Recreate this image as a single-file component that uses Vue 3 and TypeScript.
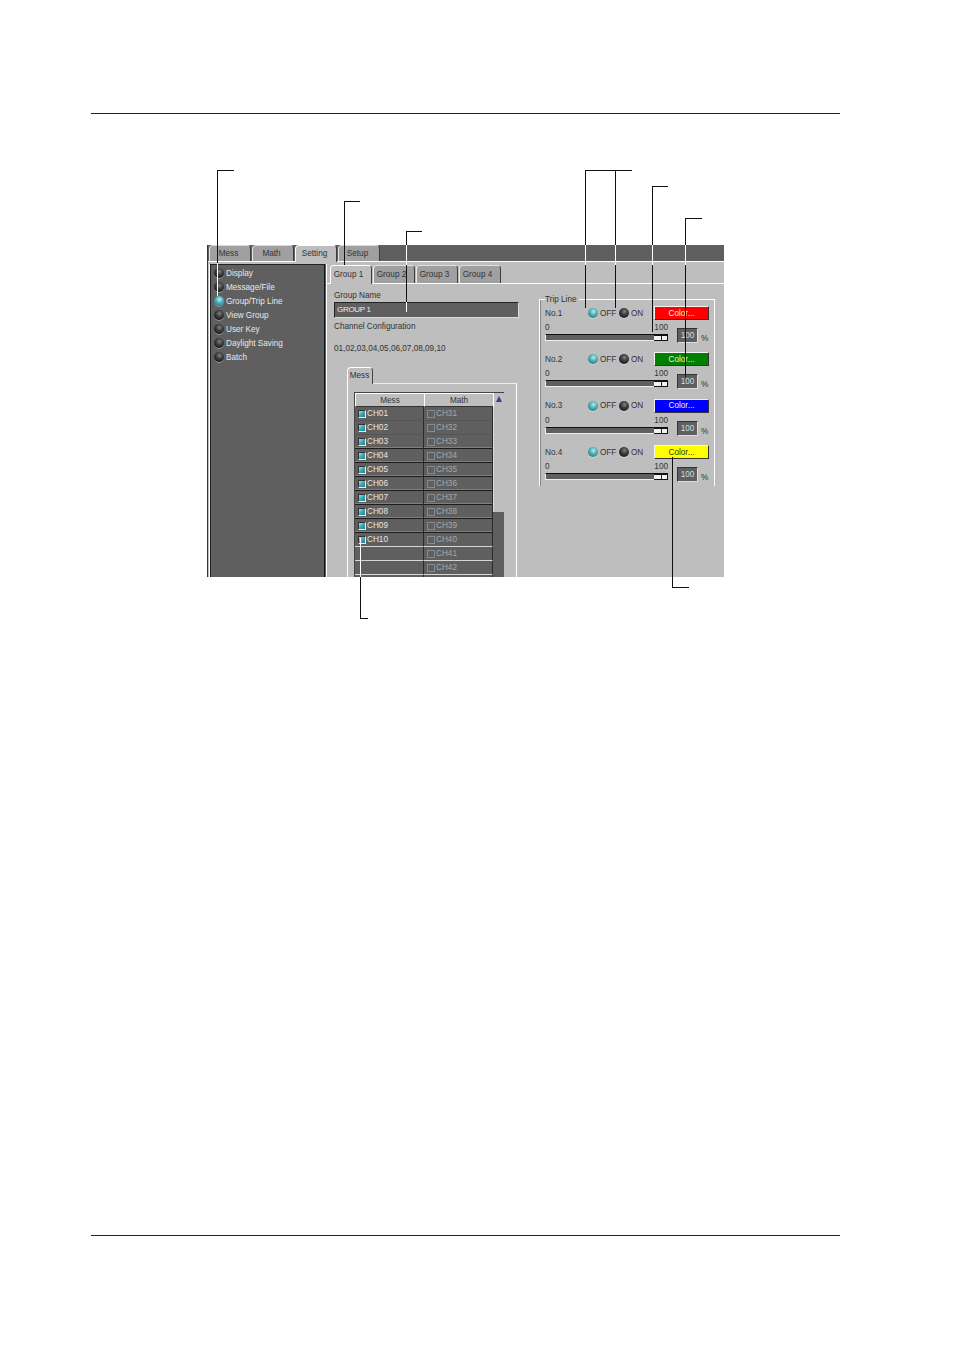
<script setup lang="ts">
const mainTabs = [
  { label: 'Mess', active: false },
  { label: 'Math', active: false },
  { label: 'Setting', active: true },
  { label: 'Setup', active: false },
]
const groupTabs = ['Group 1', 'Group 2', 'Group 3', 'Group 4']
const menu = ['Display', 'Message/File', 'Group/Trip Line', 'View Group', 'User Key', 'Daylight Saving', 'Batch']
const selectedMenu = 'Group/Trip Line'
const trips = [
  { no: 'No.1', color: 'red' },
  { no: 'No.2', color: 'green' },
  { no: 'No.3', color: 'blue' },
  { no: 'No.4', color: 'yellow' },
]
const pad = (n: number) => String(n).padStart(2, '0')
const rows = Array.from({ length: 13 }, (_, i) => ({
  id: i,
  mess: i < 10 ? `CH${pad(i + 1)}` : '',
  math: i < 12 ? `CH${i + 31}` : '',
  sep: i < 2 ? 'soft' : i < 9 ? 'hard' : 'pale',
}))
type Seg = { x1: number; y1: number; x2: number; y2: number; c: string }
const k = '#111'
const w = '#fff'
const leaders: Seg[] = [
  { x1: 217, y1: 170.5, x2: 234, y2: 170.5, c: k },
  { x1: 217.5, y1: 170, x2: 217.5, y2: 263, c: k },
  { x1: 217.5, y1: 263, x2: 217.5, y2: 296, c: w },
  { x1: 344, y1: 201.5, x2: 360, y2: 201.5, c: k },
  { x1: 344.5, y1: 201, x2: 344.5, y2: 270, c: k },
  { x1: 406, y1: 231.5, x2: 422, y2: 231.5, c: k },
  { x1: 406.5, y1: 231, x2: 406.5, y2: 245, c: k },
  { x1: 406.5, y1: 245, x2: 406.5, y2: 265, c: w },
  { x1: 406.5, y1: 265, x2: 406.5, y2: 302, c: k },
  { x1: 406.5, y1: 302, x2: 406.5, y2: 312, c: w },
  { x1: 585, y1: 170.5, x2: 632, y2: 170.5, c: k },
  { x1: 585.5, y1: 170, x2: 585.5, y2: 245, c: k },
  { x1: 585.5, y1: 245, x2: 585.5, y2: 265, c: w },
  { x1: 585.5, y1: 265, x2: 585.5, y2: 308, c: k },
  { x1: 615.5, y1: 170, x2: 615.5, y2: 245, c: k },
  { x1: 615.5, y1: 245, x2: 615.5, y2: 265, c: w },
  { x1: 615.5, y1: 265, x2: 615.5, y2: 308, c: k },
  { x1: 652, y1: 186.5, x2: 668, y2: 186.5, c: k },
  { x1: 652.5, y1: 186, x2: 652.5, y2: 245, c: k },
  { x1: 652.5, y1: 245, x2: 652.5, y2: 265, c: w },
  { x1: 652.5, y1: 265, x2: 652.5, y2: 332, c: k },
  { x1: 685, y1: 218.5, x2: 702, y2: 218.5, c: k },
  { x1: 685.5, y1: 218, x2: 685.5, y2: 245, c: k },
  { x1: 685.5, y1: 245, x2: 685.5, y2: 265, c: w },
  { x1: 685.5, y1: 265, x2: 685.5, y2: 377, c: k },
  { x1: 672.5, y1: 457, x2: 672.5, y2: 587, c: k },
  { x1: 672, y1: 587.5, x2: 689, y2: 587.5, c: k },
  { x1: 360.5, y1: 538, x2: 360.5, y2: 577, c: w },
  { x1: 360.5, y1: 577, x2: 360.5, y2: 618, c: k },
  { x1: 360, y1: 618.5, x2: 368, y2: 618.5, c: k },
]
</script>

<template>
  <div class="page">
    <div class="rule"></div>

    <div class="win">
      <div class="main-tabs">
        <div v-for="t in mainTabs" :key="t.label" class="main-tab" :class="{ active: t.active }">{{ t.label }}</div>
      </div>

      <div class="win-body">
        <aside class="side">
          <div v-for="m in menu" :key="m" class="side-item">
            <span class="led" :class="{ on: m === selectedMenu }"></span>
            <span>{{ m }}</span>
          </div>
        </aside>

        <section class="content">
          <div class="group-tabs">
            <div v-for="(g, i) in groupTabs" :key="g" class="group-tab" :class="{ active: i === 0 }">{{ g }}</div>
          </div>

          <div class="panes">
            <div class="left">
              <div class="lbl name-lbl">Group Name</div>
              <div class="name-input">GROUP 1</div>
              <div class="lbl conf-lbl">Channel Configuration</div>
              <div class="lbl conf-val">01,02,03,04,05,06,07,08,09,10</div>

              <div class="sub-tab">Mess</div>
              <div class="sub-panel">
                <div class="table">
                  <div class="cols">
                    <div class="head">Mess</div>
                    <div class="head">Math</div>
                    <template v-for="r in rows" :key="r.id">
                      <div class="cell" :class="r.sep">
                        <template v-if="r.mess">
                          <span class="check"></span>
                          <span>{{ r.mess }}</span>
                        </template>
                      </div>
                      <div class="cell math" :class="r.sep">
                        <span class="check off"></span>
                        <span v-if="r.math">{{ r.math }}</span>
                      </div>
                    </template>
                  </div>
                  <div class="scroll">
                    <div class="scroll-btn"><span class="tri"></span></div>
                    <div class="scroll-thumb"></div>
                  </div>
                </div>
              </div>
            </div>

            <div class="trip">
              <div class="legend">Trip Line</div>
              <div v-for="t in trips" :key="t.no" class="trip-row">
                <div class="trip-top">
                  <span class="trip-no">{{ t.no }}</span>
                  <span class="led on"></span>
                  <span class="off-txt">OFF</span>
                  <span class="led"></span>
                  <span class="on-txt">ON</span>
                  <button class="color-btn" :class="t.color">Color...</button>
                </div>
                <div class="trip-bottom">
                  <div class="slider">
                    <div class="scale"><span>0</span><span>100</span></div>
                    <div class="track"><span class="knob"></span></div>
                  </div>
                  <div class="num">100</div>
                  <span class="pct">%</span>
                </div>
              </div>
            </div>
          </div>
        </section>
      </div>
    </div>

    <div class="rule bottom"></div>

    <svg class="leaders" width="954" height="1350" viewBox="0 0 954 1350">
      <line
        v-for="(s, i) in leaders"
        :key="i"
        :x1="s.x1"
        :y1="s.y1"
        :x2="s.x2"
        :y2="s.y2"
        :stroke="s.c"
        stroke-width="1"
      />
    </svg>
  </div>
</template>

<style>
html,
body {
  margin: 0;
  background: #fff;
}
</style>

<style scoped>
.page {
  position: relative;
  width: 954px;
  height: 1350px;
  padding-top: 113px;
  box-sizing: border-box;
  overflow: hidden;
  font-family: "Liberation Sans", Arial, sans-serif;
  font-size: 8.2px;
  color: #333;
}
.rule {
  width: 749px;
  height: 1px;
  margin-left: 91px;
  background: #222;
}
.rule.bottom {
  margin-top: 658px;
}
.win {
  width: 517px;
  height: 332px;
  margin: 131px 0 0 207px;
  background: #bebebe;
  overflow: hidden;
  border-left: 1px solid #333;
  box-sizing: border-box;
}
.main-tabs {
  display: flex;
  height: 16px;
  padding-left: 1px;
  gap: 1px;
  background: #5f5f5f;
  border-bottom: 1px solid #fff;
}
.main-tab {
  width: 42px;
  height: 16px;
  box-sizing: border-box;
  background: #a0a0a0;
  border-top: 1px solid #d8d8d8;
  border-left: 1px solid #e4e4e4;
  border-right: 1px solid #3c3c3c;
  border-radius: 4px 4px 0 0;
  text-align: center;
  line-height: 15px;
  padding-right: 3px;
}
.main-tab.active {
  height: 17px;
  background: #bebebe;
  border-top-color: #fff;
  border-left-color: #fff;
  z-index: 1;
}
.win-body {
  display: flex;
  height: 315px;
}
.side {
  width: 115px;
  margin: 2px 0 0 2px;
  padding-top: 1px;
  box-sizing: border-box;
  background: #5f5f5f;
  border-left: 1px solid #222;
  border-top: 1px solid #222;
  border-right: 1px solid #111;
  color: #e8e8e8;
  box-shadow: 1px 0 0 #5f5f5f, 2px 0 0 #fff, -1px 0 0 #fff;
}
.side-item {
  display: flex;
  align-items: center;
  gap: 2px;
  height: 14px;
  padding-left: 3px;
}
.led {
  flex: none;
  width: 10px;
  height: 10px;
  border-radius: 50%;
  background: radial-gradient(circle at 55% 35%, #808080 0, #3c3c3c 40%, #0e0e0e 90%);
  box-shadow: 0 1px 0 rgba(255, 255, 255, 0.35);
}
.led.on {
  background: radial-gradient(circle at 55% 35%, #b8ecee 0, #44aab2 45%, #1f6a72 95%);
}
.content {
  flex: 1;
  margin-left: 2px;
  min-width: 0;
}
.group-tabs {
  display: flex;
  height: 22px;
  padding: 3px 0 0 3px;
  box-sizing: border-box;
  gap: 1px;
  border-bottom: 1px solid #fff;
}
.group-tab {
  width: 42px;
  height: 18px;
  box-sizing: border-box;
  background: #a0a0a0;
  border-top: 1px solid #e0e0e0;
  border-left: 1px solid #e8e8e8;
  border-right: 1px solid #3c3c3c;
  border-radius: 4px 4px 0 0;
  text-align: center;
  line-height: 17px;
  padding-right: 5px;
}
.group-tab.active {
  height: 19px;
  background: #bebebe;
  border-top-color: #fff;
  border-left-color: #fff;
  z-index: 1;
}
.panes {
  display: flex;
}
.left {
  width: 185px;
  margin-left: 7px;
  flex: none;
}
.lbl {
  height: 12px;
  line-height: 12px;
}
.name-lbl {
  margin-top: 6px;
}
.name-input {
  height: 16px;
  box-sizing: border-box;
  background: #5f5f5f;
  color: #eee;
  padding-left: 2px;
  font-size: 8px;
  letter-spacing: -0.3px;
  line-height: 14px;
  border-top: 1px solid #222;
  border-left: 1px solid #222;
  border-bottom: 1px solid #ddd;
  border-right: 1px solid #ddd;
}
.conf-lbl {
  margin-top: 3px;
}
.conf-val {
  margin-top: 10px;
}
.sub-tab {
  width: 26px;
  height: 17px;
  margin: 12px 0 0 13px;
  box-sizing: border-box;
  border-top: 1px solid #fff;
  border-left: 1px solid #fff;
  border-right: 1px solid #444;
  border-radius: 4px 4px 0 0;
  text-align: center;
  line-height: 15px;
  padding-right: 1px;
  position: relative;
  background: #bebebe;
  z-index: 1;
  margin-bottom: -1px;
}
.sub-panel {
  width: 170px;
  margin-left: 13px;
  height: 200px;
  box-sizing: border-box;
  border-top: 1px solid #eee;
  border-left: 1px solid #fff;
  border-right: 1px solid #fff;
  padding: 8px 0 0 6px;
}
.table {
  display: flex;
  width: 150px;
  border-top: 1px solid #444;
  border-left: 1px solid #444;
  box-sizing: border-box;
}
.cols {
  display: grid;
  grid-template-columns: 69px 69px;
  grid-auto-rows: 14px;
  width: 138px;
  flex: none;
}
.head {
  background: #bebebe;
  border-left: 1px solid #fff;
  border-top: 1px solid #fff;
  border-bottom: 1px solid #333;
  box-sizing: border-box;
  text-align: center;
  line-height: 13px;
}
.cell {
  display: flex;
  align-items: center;
  gap: 1px;
  padding-left: 3px;
  box-sizing: border-box;
  background: #5f5f5f;
  color: #e6e6e6;
  border-right: 1px solid #2a2a2a;
}
.cell.math {
  color: #a8a8a8;
}
.cell.soft {
  border-bottom: 1px solid #555;
}
.cell.hard {
  border-bottom: 1px solid #1c1c1c;
  box-shadow: inset 0 -1px 0 #808080;
}
.cell.pale {
  border-bottom: 1px solid #d6d6d6;
}
.check {
  flex: none;
  width: 8px;
  height: 8px;
  box-sizing: border-box;
  background: linear-gradient(135deg, #9fe6ea 0, #3aa6b0 50%, #2a7f88 100%);
  border: 1px solid #eee;
  border-top-color: #333;
  border-left-color: #333;
}
.check.off {
  background: #5f5f5f;
  border-color: #8a8a8a;
}
.scroll {
  width: 11px;
  flex: none;
  background: #5f5f5f;
  height: 190px;
}
.scroll-btn {
  height: 14px;
  background: #bebebe;
  display: flex;
  justify-content: center;
  padding-top: 3px;
  box-sizing: border-box;
  border-left: 1px solid #fff;
}
.tri {
  width: 0;
  height: 0;
  border-left: 3.5px solid transparent;
  border-right: 3.5px solid transparent;
  border-bottom: 6px solid #3c3c90;
}
.scroll-thumb {
  height: 105px;
  background: #bebebe;
  border-left: 1px solid #ddd;
}
.trip {
  width: 176px;
  height: 187px;
  margin: 15px 0 0 20px;
  box-sizing: border-box;
  border-top: 1px solid #fff;
  border-left: 1px solid #fff;
  border-right: 1px solid #fff;
  padding-left: 5px;
  box-shadow: inset 1px 0 0 #888;
}
.legend {
  width: fit-content;
  height: 12px;
  margin: -6px 0 0 0;
  padding: 0 2px 0 0;
  line-height: 12px;
  background: #bebebe;
}
.trip-row {
  height: 46.4px;
}
.trip-top {
  display: flex;
  align-items: center;
  height: 14px;
  padding-right: 5px;
}
.trip-no {
  width: 43px;
}
.off-txt {
  margin: 0 3px 0 2px;
  width: 16px;
}
.on-txt {
  margin-left: 2px;
}
.color-btn {
  margin-left: auto;
  width: 55px;
  height: 14px;
  padding: 0;
  font: inherit;
  color: #eee;
  text-align: center;
  border: 1px solid;
  border-color: #f4f4f4 #333 #333 #f4f4f4;
}
.color-btn.red {
  background: #fe0000;
}
.color-btn.green {
  background: #008000;
}
.color-btn.blue {
  background: #0000fe;
}
.color-btn.yellow {
  background: #fefe00;
  color: #333;
}
.trip-bottom {
  display: flex;
  align-items: flex-start;
  margin-top: 3px;
}
.slider {
  width: 123px;
  flex: none;
}
.scale {
  display: flex;
  justify-content: space-between;
  height: 10px;
  line-height: 10px;
}
.track {
  position: relative;
  height: 7px;
  margin-top: 1px;
  box-sizing: border-box;
  background: #5f5f5f;
  border-top: 1px solid #111;
  border-left: 1px solid #eee;
  border-bottom: 1px solid #eee;
}
.knob {
  position: absolute;
  right: 0;
  top: -1px;
  width: 14px;
  height: 7px;
  box-sizing: border-box;
  background: linear-gradient(to right, #f2f2f2 0 7px, #222 7px 8px, #f2f2f2 8px);
  border-top: 2px solid #111;
  border-bottom: 1px solid #111;
  border-right: 1px solid #111;
}
.num {
  width: 21px;
  height: 15px;
  margin: 5px 0 0 9px;
  box-sizing: border-box;
  background: #5f5f5f;
  color: #ddd;
  text-align: center;
  line-height: 14px;
  border: 1px solid;
  border-color: #333 #ddd #ddd #333;
}
.pct {
  margin: 10px 0 0 3px;
  line-height: 11px;
}
.leaders {
  position: absolute;
  left: 0;
  top: 0;
  pointer-events: none;
}
</style>
